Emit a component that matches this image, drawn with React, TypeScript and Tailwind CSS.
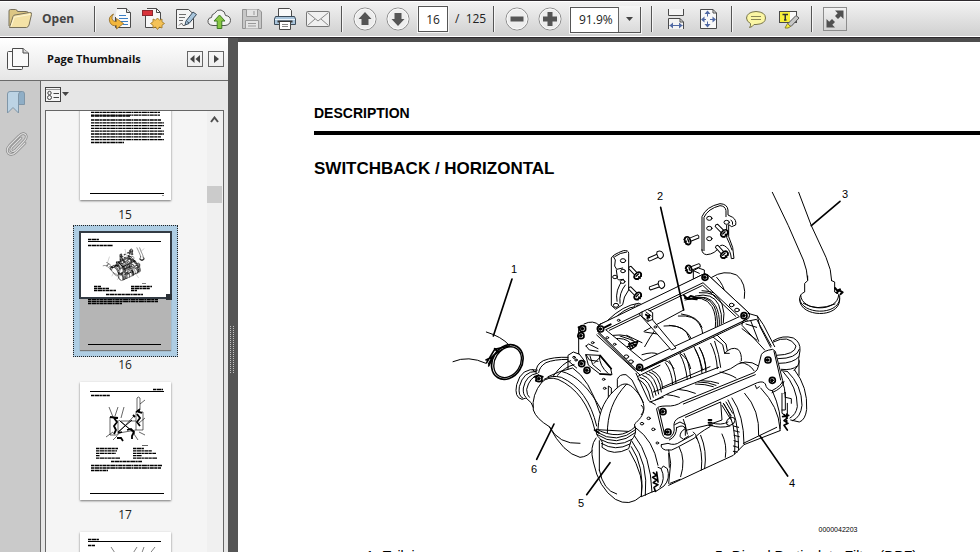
import React, { useState } from "react";

type BoltProps = { x: number; y: number; tx: number; ty: number; open?: boolean };

// bolt with its head at x,y and the shaft ending at tx,ty
const Bolt = ({ x, y, tx, ty, open }: BoltProps) => {
  const angle = (Math.atan2(ty - y, tx - x) * 180) / Math.PI;
  return (
    <g transform={`translate(${x} ${y}) rotate(${angle})`} fill="white">
      <path d="M4 -5H34Q38 0 34 5H4Z" />
      {open ? (
        <path d="M2 -12Q-12 -12 -12 0T2 12L6 6V-6Z" />
      ) : (
        <>
          <ellipse rx="8" ry="12" strokeWidth="5" />
          <path d="M-9 -7L-2 -11M-11 0H-4M-9 7L-2 11M2 -5V5" strokeWidth="4" />
        </>
      )}
    </g>
  );
};

const Nut = ({ x, y }: { x: number; y: number }) => (
  <g transform={`translate(${x} ${y})`}>
    <circle r="9" fill="white" strokeWidth="5" />
    <circle cx="-1" r="4" fill="black" />
  </g>
);

const Hole = ({ x, y, r = 5 }: { x: number; y: number; r?: number }) => (
  <ellipse cx={x} cy={y} rx={r} ry={r * 0.75} fill="white" />
);

// exhaust module, shared by the page and its thumbnail
const Engine = ({ weight = 3 }: { weight?: number }) => (
  <g
    fill="none"
    stroke="black"
    strokeWidth={weight}
    strokeLinejoin="round"
    strokeLinecap="round"
  >
    {/* tailpipe */}
    <g transform="translate(740 180) scale(.33333)">
      <path d="M97 37L145 137L190 240Q202 270 203 300M176 37L214 137L258 232Q275 270 275 302" />
      <path d="M203 288V302L194 310V336Q178 342 179 360C182 412 296 416 299 360V346Q298 342 284 336V306L275 302" />
      <path d="M182 346C184 395 292 398 296 346M179 357C184 404 294 408 299 357M190 370Q230 395 285 372" />
      <path d="M285 324L292 332L300 328M290 338L298 331L308 337L302 342" strokeWidth="6" />
      <path d="M300 64L214 137" strokeWidth="5" />
    </g>

    {/* brackets, bolts and the top frame */}
    <g transform="translate(570 190) scale(.33333)">
      <path d="M124 345V204Q128 194 160 182Q176 180 176 190V300Q160 320 158 344L138 357Z" />
      <path d="M130 200L136 210L134 228L140 238L158 234M138 262L146 270L160 268M139 240L142 262M160 268Q134 300 141 334M166 285Q146 310 150 340M134 200Q150 188 170 186" />
      <Hole x={159} y={212} r={8} />
      <Hole x={159} y={243} r={7} />
      <Hole x={135} y={261} r={7} />
      <Hole x={158} y={275} r={7} />
      <Hole x={138} y={346} r={8} />
      <path d="M396 180V80Q408 50 450 41Q472 42 474 60V75L488 82Q500 90 497 105L485 110L476 104V140Q492 172 492 205L484 206Q482 182 470 172Q456 160 448 170Q436 192 410 194Q396 192 396 180Z" />
      <path d="M402 182V82Q414 56 450 47Q466 48 468 62V80M483 90Q490 95 488 103M470 106V142Q478 158 486 180" />
      <Hole x={418} y={85} r={8} />
      <Hole x={418} y={115} r={8} />
      <Hole x={418} y={146} r={8} />
      <Hole x={470} y={97} r={8} />
      <Bolt x={463} y={130} tx={438} ty={105} />
      <Bolt x={463} y={194} tx={438} ty={167} />
      <Bolt x={353} y={152} tx={388} ty={138} />
      <Bolt x={357} y={238} tx={390} ty={225} />
      <Bolt x={203} y={257} tx={180} ty={233} />
      <Bolt x={203} y={318} tx={178} ty={293} />
      <Bolt x={268} y={195} tx={234} ty={210} open />
      <Bolt x={272} y={284} tx={238} ty={296} open />

      {/* rear canister */}
      <path d="M425 262Q462 238 500 255Q530 280 523 325M440 262Q462 285 465 312M370 275V242L385 234L403 240V252M370 242L388 250" />

      {/* hoses behind the frame */}
      <path d="M112 392Q160 345 205 340M122 396Q165 352 195 350M140 398L155 380" />
      <ellipse cx="205" cy="350" rx="12" ry="10" fill="white" />
      <ellipse cx="205" cy="350" rx="6" ry="5" />

      {/* upper pipe seen through the frame */}
      <path d="M345 330Q404 312 426 350Q440 376 436 412M354 328Q410 310 432 348Q444 374 442 410M362 326Q416 310 436 346Q450 370 448 406M376 318Q428 306 446 344Q458 372 454 402M388 308Q440 304 456 342Q466 370 460 398M396 302Q446 304 460 330" />
      <path d="M342 316L352 326L362 318L382 324M345 324L380 328" strokeWidth="6" />
      <path d="M341 360L222 424M325 378Q372 374 388 402Q398 418 398 430M334 372Q384 378 396 412M282 408Q330 402 350 428Q360 444 362 462M298 406Q340 408 358 436Q364 446 368 456" />
      <path d="M224 426L262 432M258 416Q240 440 224 470M130 436Q176 430 190 452M130 446Q166 442 180 458M150 438Q180 446 200 458M262 412Q290 436 300 464" />
      <path d="M176 462L204 454L198 468L182 478ZM180 460L190 474M186 458L196 468M172 470L200 462" strokeWidth="4" />
      <path d="M216 494Q250 484 262 492M372 470Q392 506 398 540M390 476Q408 510 408 540M270 510Q296 506 312 536M330 490Q356 506 362 536" />

      {/* frame: the window is cut out so that the bars cover the pipes */}
      <path
        d="M84 424Q76 410 92 402L204 354M222 344L395 255Q404 248 415 256L538 370Q540 386 526 390L222 536Q208 546 196 536L84 424"
      />
      <path
        d="M92 402L395 255Q404 248 415 256L538 370Q540 386 526 390L222 536Q208 546 196 536L84 424Q76 410 92 402ZM108 420L220 512L508 380L400 279Z"
        fill="white"
        fillRule="evenodd"
      />
      <path d="M118 421L398 286L497 379M84 430L194 540M214 544L532 392" />
      <path
        d="M208 372L304 480L318 474L248 390V368L232 358L216 366Z"
        fill="white"
      />
      <path d="M216 366V380L234 394L248 388M234 376V394M228 366L244 378M170 436L216 458" />
      <path d="M228 374L238 382M232 384L238 376" strokeWidth="6" />
      <Nut x={405} y={262} />
      <Nut x={522} y={377} />
      <Nut x={92} y={417} />
      <Nut x={209} y={532} />
      <path d="M104 412L122 403" strokeWidth="6" />
      <Hole x={112} y={443} r={4} />
      <Hole x={134} y={463} r={4} />
      <Hole x={146} y={391} r={4} />
      <Hole x={256} y={411} r={4} />
      <Hole x={169} y={500} r={7} />
      <Hole x={183} y={515} r={7} />
      <Hole x={485} y={345} r={7} />
      <Hole x={501} y={360} r={7} />
      <path d="M272 52L341 360" strokeWidth="5" />
    </g>

    {/* clamp, left plate */}
    <g transform="translate(440 240) scale(.33333)">
      <path d="M139 276Q185 290 207 315M39 365Q85 345 138 370" />
      <g transform="rotate(32 202 366)">
        <ellipse cx="202" cy="366" rx="44" ry="55" strokeWidth="5" />
        <ellipse cx="203" cy="366" rx="38" ry="49" strokeWidth="4" />
      </g>
      <path d="M140 368L164 328L208 318M146 372L160 346L184 330M138 360L158 350M146 378L156 358L150 352M164 326L176 338" strokeWidth="5" />
      <path d="M216 117L160 288" strokeWidth="5" />

      <path d="M416 340V262M432 252Q460 238 478 256M384 388V346L400 336L416 342M384 352Q340 350 310 362Q286 374 288 400M384 358Q342 358 318 368Q298 380 296 398" />
      <path d="M340 408Q370 366 392 362M352 406Q376 380 402 374M384 362L410 384M416 340L436 366M470 285L600 405" />
      <path d="M438 318L446 312L474 326M438 318L448 330L474 334M438 344L478 346L512 386L516 404L480 402L446 376Z" />
      <path d="M450 348L458 374L482 394M478 348Q478 378 504 400M438 344L448 360L474 364M462 370L480 352" />
      <path d="M480 402L512 404M480 346L514 386" strokeWidth="5" />
      <path d="M416 262L436 260M414 288L430 292" strokeWidth="6" />
      <Nut x={428} y={266} />
      <Nut x={423} y={287} />
      <Nut x={425} y={371} />
      <Nut x={441} y={391} />
      <Hole x={402} y={352} r={4} />
      <Hole x={408} y={360} r={4} />
      <Hole x={458} y={308} r={4} />
      <Hole x={491} y={418} r={4} />
      <Hole x={494} y={445} r={4} />
      <path d="M505 482V438L514 444V470" />
    </g>

    {/* right side and the filter body */}
    <g transform="translate(600 310) scale(.33333)">
      <path d="M444 10L472 18L490 44L524 110M436 28Q426 30 426 46L494 120M440 34L470 28L514 108M472 18L480 50L512 112M426 56L470 90M452 32L476 94M438 42L470 52" />
      <path d="M520 92Q548 74 580 84Q602 96 600 122L596 146Q600 156 594 166L582 182M598 118Q590 146 534 146M597 140Q580 160 538 160M592 168Q576 182 544 178" />
      <path d="M520 96Q566 72 588 108Q586 134 530 136M544 182L560 184M584 180Q624 232 620 298Q616 330 598 336L572 330" />
      <path d="M562 184Q606 226 606 286Q602 322 578 332M550 186Q592 230 592 290Q588 314 570 324M546 212Q556 232 556 262M597 152V196" />
      <path d="M546 250V310L556 316M552 250L556 246V262L574 266V280M562 280V320M556 262V300H546" />
      <path d="M552 314L562 324L552 332L564 340L552 346L562 360M548 320L566 316M560 312V340" strokeWidth="5" />

      {/* bellows */}
      <path d="M114 208Q142 218 152 268M120 202Q150 208 160 262M128 196Q158 204 168 256M138 190Q166 196 176 252M148 186Q178 194 184 246M156 182Q186 194 188 236" />
      <path d="M112 200L180 166M126 180L190 152M150 276L190 262M108 190L146 272L166 284" />
      <path d="M160 246L356 172M186 232L330 170M196 158Q216 184 218 224M208 152Q226 180 228 220M240 134Q256 160 262 208M252 130Q268 156 272 204M286 118Q302 146 306 190M298 112Q316 140 318 186M332 100Q350 134 352 176M344 94Q358 134 362 172M340 82L368 104L374 130H388M374 130Q394 108 414 118Q426 130 424 152M352 76L378 102L382 122" />
      <path d="M166 270L210 248L392 176Q436 140 476 168M200 254Q222 256 238 262M234 238Q262 240 286 250M286 222Q316 222 340 230M294 216Q326 216 348 226M304 212Q334 212 356 220M360 186Q390 192 408 204M420 156Q450 162 462 182" />

      {/* filter body */}
      <path d="M206 526L300 482L400 436L432 404L540 362M540 362Q548 310 516 240M434 250Q480 300 476 376M482 234Q536 290 540 356M466 226L470 236L478 230M430 400L530 352M396 264Q432 316 432 402M384 270Q416 320 416 420M366 372Q382 404 376 442" />
      <path d="M372 282Q412 340 404 432M366 286L392 328M370 280L394 318M378 276L398 310M400 348L416 352M402 362L418 366M402 376L418 380M402 392L416 396M400 408L414 412M400 424L412 426" />
      <path d="M302 376Q322 422 314 476M290 382Q310 424 304 480M238 412Q258 450 242 500M206 420L212 460L206 520" />
      <path d="M250 328L256 346L262 372M256 322L362 276L366 330L338 340M262 360L330 344M224 344L240 336L256 344V376M232 352Q250 342 256 356Q240 364 240 380L250 388L266 378" />
      <path d="M184 404Q180 414 196 420Q216 424 232 412L284 384Q292 372 330 350M184 404L204 400Q224 408 240 396L280 374M280 366Q290 372 290 386M332 346Q360 356 390 348M332 338Q364 348 384 336" />
      <ellipse cx="392" cy="334" rx="14" ry="10" transform="rotate(-40 392 334)" />
      <path d="M326 330H334M326 338H334M328 346H336" strokeWidth="6" />

      {/* front bar */}
      <path
        d="M170 296Q172 288 198 288Q226 290 246 276L462 188Q474 182 476 166L484 134Q490 122 518 118L526 124L548 212Q546 226 516 242Q500 240 496 222Q490 212 472 218L236 324Q220 332 222 350Q226 372 208 384Q192 388 188 374Z"
        fill="white"
      />
      <path d="M176 296L194 374M250 282L466 194M522 124L542 210M208 390Q230 380 230 352M516 248Q550 234 552 214" />
      <Nut x={189} y={305} />
      <Nut x={204} y={366} />
      <Nut x={504} y={150} />
      <Nut x={517} y={211} />
      <Hole x={146} y={325} r={5} />
      <Hole x={126} y={341} r={5} />
      <Hole x={160} y={358} r={5} />
      <Hole x={172} y={399} r={4} />
      <path d="M480 378L563 498" strokeWidth="5" />
    </g>

    {/* canisters 5 and 6 */}
    <g transform="translate(500 360) scale(.33333)">
      <path d="M112 30Q64 20 50 74Q42 112 66 118L78 114Q98 128 100 142M108 34Q70 34 58 80Q54 108 68 114M112 40Q78 44 70 84Q68 104 78 112M116 44Q88 52 80 88Q80 106 88 112M98 28L104 36" />
      <path d="M104 50H128M108 62H126" strokeWidth="6" />
      <Nut x={117} y={56} />
      <path d="M126 66Q94 104 100 150Q108 176 148 200Q190 280 240 292Q264 290 276 272M148 200Q176 254 240 250M126 66Q144 48 174 58Q258 96 284 208M132 58Q156 44 184 52Q264 88 290 198M144 50Q180 32 218 24Q268 56 300 160M184 34Q250 50 304 150" />

      <path
        d="M294 208C296 150 318 110 356 80C372 66 390 72 402 86C420 104 432 124 432 146C430 168 416 180 404 192V214Z"
        fill="white"
      />
      <path d="M322 222C322 164 338 116 380 72M352 82V58Q358 42 378 44L396 60L430 128M424 136Q438 148 424 164" />
      <path
        d="M290 208Q284 222 300 236Q312 246 306 262Q340 290 386 266L394 240Q410 226 406 200Q360 244 290 208Z"
        fill="white"
      />
      <path d="M290 216Q350 256 408 208M292 224Q350 264 406 218M300 238Q350 266 396 238M304 250Q346 276 390 252" />
      <path d="M284 210L296 218" strokeWidth="6" />
      <path d="M288 234Q268 260 280 306Q296 384 346 418Q388 442 424 408Q436 352 388 272M298 242V332M298 330Q310 392 350 402M404 228Q452 286 456 396M396 244Q446 310 436 406M408 204Q460 240 474 316M394 260Q434 320 424 406M424 410L456 396L468 392" />
      <path d="M474 322L484 326L490 318L502 326Q512 356 492 378L468 394M484 328Q498 356 480 382M506 280L508 322M510 370L540 358" />
      <path d="M460 338L470 346L458 352L470 360L460 368L474 374L462 382L466 394M470 336L474 366" strokeWidth="5" />
      <path d="M162 192L110 298M330 308L260 404" strokeWidth="5" />
    </g>
  </g>
);

const ink = "3 .5 5 .4 2 .5 4 .4";

const TextLine = ({ x1, x2, y }: { x1: number; x2: number; y: number }) => (
  <path d={`M${x1} ${y}H${x2}`} strokeDasharray={ink} strokeWidth="1.3" />
);

const rows = (from: number, count: number, step: number) =>
  Array.from({ length: count }, (_, i) => from + i * step);

const Page15 = () => (
  <g stroke="black">
    {rows(22, 5, 2.8).map((y) => (
      <TextLine key={y} x1={11} x2={80} y={y} />
    ))}
    <TextLine x1={11} x2={50} y={34} />
    {rows(38, 8, 2.8).map((y, i) => (
      <TextLine key={y} x1={11} x2={i % 3 ? 84 : 81} y={y} />
    ))}
    <TextLine x1={11} x2={44} y={60.5} />
    <path d="M10 111.5H84" />
    <path d="M82 113.5H84" strokeOpacity=".4" />
  </g>
);

const Page16 = () => (
  <g stroke="black">
    <TextLine x1={8} x2={19} y={7.5} />
    <path d="M8 9.5H81" />
    <TextLine x1={8} x2={33} y={13.5} />
    <svg x="22" y="15" width="45" height="37" viewBox="450 185 410 350">
      <Engine weight={12} />
    </svg>
    <path d="M62 51.5H66" strokeOpacity=".5" />
    {rows(54.5, 3, 2).map((y, i) => (
      <g key={y}>
        <TextLine x1={14} x2={[21, 29, 36][i]} y={y} />
        <TextLine x1={51} x2={[72, 70, 57][i]} y={y} />
      </g>
    ))}
    <TextLine x1={26} x2={63} y={62.5} />
    <TextLine x1={8} x2={78} y={67.5} />
    <TextLine x1={8} x2={78} y={69.5} />
    <TextLine x1={8} x2={42} y={71.5} />
    <path d="M8 112.5H81" />
  </g>
);

const Page17 = () => (
  <g stroke="black">
    <TextLine x1={73} x2={83} y={7.5} />
    <path d="M10 9.5H84" />
    <TextLine x1={11} x2={30} y={13.5} />
    <g fill="none">
      <path
        d="M29 25L33 35M38 25L35 34M44 25L41 36M65 18L60 22M65 36L59 41M65 53L59 50M26 55L33 50M58 58L54 52M33 58L37 54M57 28V16Q58 14 60 16V28M56 30H63V48H56ZM30 35V53H38V38M39 38L55 52M39 50L54 34M41 39H56M39 51L56 48"
        strokeWidth=".6"
      />
      <path d="M30 35L38 36M34 36L37 40L34 44L36 48L34 52M57 32L60 36L57 40L60 44M56 30L59 28V30L62 31M53 33L55 35M47 48L51 47L54 50L52 54V57M38 51L42 50M37 56H41L43 59" strokeWidth="1.8" />
      <path d="M40 39L52 49M38 50L52 38" />
    </g>
    <path d="M62 63.5H68" strokeOpacity=".6" />
    {rows(66.5, 5, 2.4).map((y, i) => (
      <g key={y}>
        <TextLine x1={16} x2={[38, 37, 36, 20, 40][i]} y={y} />
        <TextLine x1={53} x2={[64, 72, 76, 62, 77][i]} y={y} />
      </g>
    ))}
    <TextLine x1={31} x2={62} y={79.5} />
    <TextLine x1={11} x2={82} y={83.5} />
    <TextLine x1={11} x2={81} y={86} />
    <TextLine x1={11} x2={28} y={88.5} />
    <path d="M10 111.5H84" />
  </g>
);

const Page18 = () => (
  <g stroke="black">
    <TextLine x1={8} x2={19} y={7.5} />
    <path d="M8 9.5H81" />
    <TextLine x1={8} x2={15} y={13.5} />
    <path d="M31 15L37 24M57 15L50 26M64 15L60 26M75 15L68 24" strokeWidth=".5" />
  </g>
);

const thumbnails = [
  { page: 15, Drawing: Page15 },
  { page: 16, Drawing: Page16 },
  { page: 17, Drawing: Page17 },
  { page: 18, Drawing: Page18 },
];

const Separator = () => (
  <div className="h-[26px] w-[2px] shrink-0 border-l border-[#555] bg-[#f6f6f6]" />
);

const ToolButton = ({ label, children }: { label: string; children: React.ReactNode }) => (
  <button aria-label={label} className="grid h-7 w-[33px] shrink-0 place-items-center">
    <svg width="24" height="24" viewBox="0 0 24 24" fill="none" stroke="#4a4a4a">
      {children}
    </svg>
  </button>
);

const RoundButton = ({ label, d }: { label: string; d: string }) => (
  <ToolButton label={label}>
    <circle cx="12" cy="12" r="11" fill="#ededed" stroke="#8c8c8c" />
    <circle cx="12" cy="12" r="10" stroke="#fafafa" />
    <path d={d} fill="#555" stroke="none" />
  </ToolButton>
);

const Toolbar = () => {
  const [page, setPage] = useState("16");
  return (
    <header className="flex h-[38px] shrink-0 items-center border-y border-[#2d292d] bg-linear-to-b from-[#f3f3f3] to-[#cfcfcf] text-[#222] shadow-[inset_0_1px_0_#fff,inset_0_-1px_0_#fff]">
      <button className="flex w-[94px] shrink-0 items-center gap-2 pl-2 text-[12px] font-bold text-[#444]">
        <svg width="26" height="22" viewBox="0 0 26 22" fill="none" stroke="#77705a">
          <path d="M1 18V3Q1 1.500 2.500 1.500H7.500Q9 1.500 9.500 3.500H18.500Q20 3.500 20 5V8" fill="#dcc684" />
          <path d="M1.500 19.500L5 8.500Q5.500 7 7 7L21.500 4.500Q24 4 23.500 6.500L21 17Q20.500 19 18.500 19.500Z" fill="#f4e2a6" />
          <path d="M3 18.500L6.300 9.200L22 6.500" stroke="#fff6d5" />
        </svg>
        Open
      </button>
      <Separator />
      <div className="flex px-[7px]">
        <ToolButton label="Export file">
          <path d="M9 1.500H18.500L22.500 5.500V20.500H7.500V10" fill="#fbfbfb" />
          <path d="M18.500 1.500V5.500H22.500" fill="#ddd" />
          <path d="M11 8.500H18M11 11.500H20M13 14.500H20M15 17.500H20" stroke="#3d7fc4" />
          <path d="M5.500 7Q-.5 10 2 15.500Q4 19.500 8.500 18.500V22L15.500 16.500L8.500 11.500V14.500Q5 15 4 12Q3.500 9.500 5.500 7Z" fill="#f2b63c" stroke="#8f6a24" strokeWidth=".8" />
        </ToolButton>
        <ToolButton label="Create PDF">
          <path d="M4.500 5V20.500H19.500V5.500L15.500 1.500H6" fill="#f7f7f7" />
          <path d="M15.500 1.500V5.500H19.500" />
          <rect x="1.500" y="3.500" width="10" height="5" fill="#d8333b" stroke="#8c2930" />
          <path d="M16.500 11L18.500 13.200L21 12L21 14.800L23.500 16.500L21 18.200V21L18.500 20L16.500 22.500L14.500 20L12 21V18.200L9.500 16.500L12 14.800V12L14.500 13.200Z" fill="#f4c257" stroke="#9c7422" strokeWidth=".8" />
        </ToolButton>
        <ToolButton label="Sign">
          <path d="M2.500 2.500H14.500L19.500 7V21.500H2.500Z" fill="#f4f4f4" />
          <path d="M5 7.500H12M5 10.500H11M5 13.500H9M5 18.500L7.500 16L9 18.500H11" strokeWidth=".8" />
          <path d="M11 18L12 14L19 5L22.500 7.500L15 16.500Z" fill="#a9c6dd" stroke="#384a5a" />
          <path d="M13 14.500L15 16" stroke="#384a5a" />
        </ToolButton>
        <ToolButton label="Upload">
          <path d="M6 18.500Q.5 18 1 13.500Q1.500 10.500 4.500 10.500Q4.500 7 7.500 6.500Q10 2 14 3Q18 4 18.500 8.500Q23.500 9 23.500 13.500Q23 18 18 18.500Z" fill="#f3f3f3" stroke="#555" />
          <path d="M12.500 8L18 14H14.800V21.500H10.200V14H7Z" fill="#88c742" stroke="#3f7b24" />
        </ToolButton>
        <ToolButton label="Save">
          <path d="M2.500 2.500H19L21.500 5V21.500H2.500Z" fill="#c7c7c7" stroke="#939393" />
          <path d="M6.500 2.500V9.500H17.500V2.500M5.500 21.500V13.500H18.500V21.500" fill="#e4e4e4" stroke="#9a9a9a" />
          <path d="M14 4V8M8 16.500H16M8 19H16" stroke="#999" />
        </ToolButton>
        <ToolButton label="Print">
          <path d="M5.500 10V1.500H16.500L18.500 3.500V10" fill="#fafafa" />
          <path d="M2.500 9.500H21.500L22.500 12V17.500H1.500V12Z" fill="#a9c4db" stroke="#3c4c5a" />
          <path d="M2 12.500H22" stroke="#edf5fc" />
          <path d="M4.500 14.500H19.500" stroke="#333" strokeWidth="2" />
          <path d="M6.500 15V22.500H17.500V15" fill="#fff" />
          <path d="M9 17.500H15M9 19.500H15" stroke="#888" />
        </ToolButton>
        <ToolButton label="Email">
          <rect x=".5" y="4.500" width="23" height="15" rx="1" fill="#f0f0f0" stroke="#777" />
          <path d="M1.500 5.500L12 14L22.500 5.500M1.500 18.500L9 12M22.500 18.500L15 12" stroke="#888" />
        </ToolButton>
      </div>
      <Separator />
      <div className="flex pl-[5px]">
        <RoundButton label="Previous page" d="M12 5L18.500 12H15.500V18H8.500V12H5.500Z" />
        <RoundButton label="Next page" d="M12 19L5.500 12H8.500V6H15.500V12H18.500Z" />
      </div>
      <input
        aria-label="Page number"
        value={page}
        onChange={(e) => setPage(e.target.value)}
        className="ml-1 h-[26px] w-[30px] shrink-0 border border-[#555] bg-white text-center text-[12px] outline outline-[#f5f5f5]"
      />
      <span className="w-[45px] shrink-0 pl-[7px] text-[12px] whitespace-pre">/  125</span>
      <Separator />
      <div className="flex pl-[5px]">
        <RoundButton label="Zoom out" d="M5.500 9.500H18.500V14.500H5.500Z" />
        <RoundButton label="Zoom in" d="M5 9.500H9.500V5H14.500V9.500H19V14.500H14.500V19H9.500V14.500H5Z" />
      </div>
      <div className="relative mr-[10px] ml-1 shrink-0">
        <select
          aria-label="Zoom level"
          className="h-[26px] w-[71px] appearance-none border border-[#555] bg-white pl-2 text-[12px] outline outline-[#f5f5f5]"
        >
          <option>91.9%</option>
          <option>100%</option>
          <option>125%</option>
        </select>
        <div className="pointer-events-none absolute inset-y-px right-px grid w-[22px] place-items-center border-l border-[#666] bg-linear-to-b from-[#f4f4f4] to-[#dadada]">
          <svg width="7" height="4" viewBox="0 0 7 4">
            <path d="M0 0H7L3.500 4Z" fill="#444" />
          </svg>
        </div>
      </div>
      <Separator />
      <div className="flex px-[6px]">
        <ToolButton label="Fit width">
          <path d="M4.500 2V8.500H19.500V2M4.500 22V11.500H16L19.500 15V22" fill="#f4f4f4" />
          <path d="M16 11.500V15H19.500" />
          <path d="M5.500 18.500H18.500" stroke="#5069a4" />
          <path d="M9 15.500V21.500L5.500 18.500ZM15 15.500V21.500L18.500 18.500Z" fill="#5069a4" stroke="none" />
        </ToolButton>
        <ToolButton label="Fit page">
          <path d="M3.500 2.500H16L19.500 6V21.500H3.500Z" fill="#f8f8f8" />
          <path d="M16 2.500V6H19.500" />
          <path d="M10.500 4V9.500M10.500 14.500V20M5 12.500H9M13 12.500H18" stroke="#5069a4" />
          <path d="M10.500 3.500L13.500 7H7.500ZM10.500 20.500L13.500 17H7.500ZM4 12.500L7.500 9.500V15.500ZM19 12.500L15.500 9.500V15.500Z" fill="#5069a4" stroke="none" />
        </ToolButton>
      </div>
      <Separator />
      <div className="flex px-[6px]">
        <ToolButton label="Comment">
          <path d="M12 4.500Q21.500 5 21.500 11T12 17.500H10Q8.500 20 5.500 20.500Q7 19 6.500 16.500Q2.500 14.500 2.500 11Q3 5 12 4.500Z" fill="#fbf6a4" stroke="#77744b" />
          <path d="M7 9.500H17M7 12.500H17" stroke="#8b8757" />
        </ToolButton>
        <ToolButton label="Highlight">
          <rect x="2.500" y="4.500" width="17" height="11" fill="#fafafa" />
          <rect x="3" y="5" width="10" height="10" fill="#f8f03c" stroke="none" />
          <path d="M5.500 7.500H11M8.250 7.500V13M7 13H9.500" stroke="#333" strokeWidth="1.500" />
          <path d="M10.500 17L19 8.500L22 11L14 19.500Z" fill="#c6c6c6" stroke="#555" />
          <path d="M10.500 16.500L13.500 19.500L11 21H8Z" fill="#f8ee3c" stroke="#8a842f" />
        </ToolButton>
      </div>
      <Separator />
      <button
        aria-label="Full screen"
        className="ml-[10px] grid size-6 shrink-0 place-items-center border border-[#8c8c8c] bg-linear-to-b from-[#f2f2f2] to-[#d4d4d4]"
      >
        <svg width="20" height="20" viewBox="0 0 20 20" fill="#505050">
          <path d="M10 1.500H18.500V10L15.800 7.300L13 10L10 7L12.700 4.200Z" />
          <path d="M10 18.500H1.500V10L4.200 12.700L7 10L10 13L7.300 15.800Z" />
        </svg>
      </button>
    </header>
  );
};

const Sidebar = () => (
  <aside className="flex w-[228px] shrink-0 bg-[#e6e6e6]">
    <nav className="flex w-[40px] shrink-0 flex-col items-center bg-[#cacaca]">
      <button
        aria-label="Page thumbnails"
        className="grid h-[43px] w-full place-items-center border-b border-[#6a6a6a] bg-linear-to-b from-white to-[#e6e6e6] pr-1"
      >
        <svg width="22" height="24" viewBox="0 0 22 24" fill="#fafafa" stroke="#4b4b4b">
          <rect x=".5" y="4.500" width="15" height="18" rx="1" />
          <path d="M5.500 1.500H16L21.500 6V19.500H5.500Z" />
          <path d="M16 1.500V6H21.500" fill="#ddd" />
        </svg>
      </button>
      <button aria-label="Bookmarks" className="grid h-[42px] w-full place-items-center pr-2">
        <svg width="18" height="24" viewBox="0 0 18 24" stroke="#7f96a8">
          <path d="M11.500 1.500H15.500Q17.500 1.500 17.500 4V14.500H11.500Z" fill="#8faec6" />
          <path d="M.5 4Q.5 1.500 3 1.500H14Q11.500 2 11.500 5V23L6 17.500L.5 23Z" fill="#bcd3e4" />
        </svg>
      </button>
      <button aria-label="Attachments" className="grid h-[42px] w-full place-items-center pr-[6px]">
        <svg width="24" height="26" viewBox="0 0 24 26" fill="none" strokeLinecap="round">
          <path d="M16 7L7 16Q5 18.500 6.500 20Q8.500 21 10.500 19L19.500 9.500Q22.500 6 20.500 3.500Q17.500 1 14 5L4.500 14.500Q.5 19 3.500 22.500Q7 25 11 21L20 12" stroke="#868686" strokeWidth="2.600" />
          <path d="M16 7L7 16Q5 18.500 6.500 20Q8.500 21 10.500 19L19.500 9.500Q22.500 6 20.500 3.500Q17.500 1 14 5L4.500 14.500Q.5 19 3.500 22.500Q7 25 11 21L20 12" stroke="#dedede" strokeWidth="1.200" />
        </svg>
      </button>
    </nav>
    <section className="flex min-w-0 flex-1 flex-col">
      <div className="flex h-[43px] shrink-0 items-center gap-[5px] border-b border-[#6a6a6a] bg-linear-to-b from-white to-[#e6e6e6] pr-1 pl-[7px]">
        <h2 className="flex-1 text-[11px] font-bold whitespace-nowrap text-[#111]">Page Thumbnails</h2>
        <button aria-label="Collapse" className="grid size-4 place-items-center border border-[#666]">
          <svg width="10" height="8" viewBox="0 0 10 8" fill="#444">
            <path d="M4.500 0V8L0 4ZM10 0V8L5.500 4Z" />
          </svg>
        </button>
        <button aria-label="Expand" className="grid size-4 place-items-center border border-[#666]">
          <svg width="5" height="8" viewBox="0 0 5 8" fill="#444">
            <path d="M0 0L5 4L0 8Z" />
          </svg>
        </button>
      </div>
      <div className="flex min-h-0 flex-1 flex-col border-l border-[#666] pr-1 pl-1">
        <button aria-label="Options" className="flex h-[29px] w-6 shrink-0 items-center gap-px pb-[3px]">
          <svg width="16" height="15" viewBox="0 0 16 15" fill="none" stroke="#444" className="shrink-0">
            <rect x=".5" y=".5" width="15" height="14" fill="#f4f4f4" />
            <path d="M1 2.500H15" stroke="#999" />
            <circle cx="4.500" cy="6" r="1.700" />
            <circle cx="4.500" cy="10.500" r="2" />
            <path d="M8.500 6.500H14M8.500 10.500H14" />
          </svg>
          <svg width="7" height="4" viewBox="0 0 7 4" className="shrink-0">
            <path d="M0 0H7L3.500 4Z" fill="#444" />
          </svg>
        </button>
        <div className="flex min-h-0 flex-1 overflow-hidden border-x border-t border-[#666] bg-[#f5f5f5]">
          <ul className="-mt-9 flex-1 pr-[3px]">
            {thumbnails.map(({ page, Drawing }) => {
              const current = page === 16;
              return (
                <li key={page} className="flex h-[150px] flex-col items-center">
                  <a
                    href={`#page-${page}`}
                    aria-label={`Page ${page}`}
                    className={
                      current
                        ? "relative border border-dotted border-[#222] bg-[#aecde3] p-[6px]"
                        : "relative p-[7px]"
                    }
                  >
                    <svg
                      width="91"
                      height="118"
                      viewBox="0 0 91 118"
                      className={
                        current
                          ? "bg-[#b5b5b5] shadow-[0_1px_1px_#777]"
                          : "bg-white shadow-[0_1px_2px_#777]"
                      }
                    >
                      {current && <rect width="91" height="66" fill="white" />}
                      <Drawing />
                    </svg>
                    {current && (
                      <div className="absolute inset-x-[5px] top-[5px] h-[68px] border-2 border-[#333b44]">
                        <div className="absolute -right-[2px] -bottom-[3px] size-[6px] bg-[#2c3136]" />
                      </div>
                    )}
                  </a>
                  <span className="text-[12px] leading-4 text-[#222]">{page}</span>
                </li>
              );
            })}
          </ul>
          <div className="flex w-4 shrink-0 flex-col items-center bg-[#f0f0f0] pr-px">
            <svg width="9" height="7" viewBox="0 0 9 7" fill="none" stroke="#505050" strokeWidth="2" className="mt-[5px]">
              <path d="M1 6L4.500 1.500L8 6" />
            </svg>
            <div className="mt-[63px] h-[17px] w-full bg-[#cbcbcb]" />
          </div>
        </div>
      </div>
    </section>
  </aside>
);

const callouts = [
  { n: 1, x: 514, y: 273 },
  { n: 2, x: 660, y: 200 },
  { n: 3, x: 845, y: 198 },
  { n: 4, x: 792, y: 487 },
  { n: 5, x: 581, y: 507 },
  { n: 6, x: 534, y: 473 },
];

const Document = () => (
  <main className="min-w-0 flex-1 overflow-hidden bg-white pl-[76px] font-['Liberation_Sans',Arial,sans-serif] text-black">
    <h1 className="pt-[61px] text-[14px] leading-5 font-bold">DESCRIPTION</h1>
    <hr className="mt-2 border-t-4 border-black" />
    <h2 className="mt-6 text-[17px] leading-5 font-bold">SWITCHBACK / HORIZONTAL</h2>
    <svg width="430" height="361" viewBox="440 179 430 361" className="ml-[126px]">
      <Engine />
      <g fontSize="11" textAnchor="middle">
        {callouts.map(({ n, x, y }) => (
          <text key={n} x={x} y={y}>
            {n}
          </text>
        ))}
        <text x="838" y="532" fontSize="7">
          0000042203
        </text>
      </g>
    </svg>
    <div className="mt-[6px] ml-[52px] flex text-[14px] leading-5">
      <p className="flex w-[349px] shrink-0 gap-[5px]">
        <span>1.</span>
        <span>Tailpipe</span>
      </p>
      <p className="flex gap-[5px] whitespace-nowrap">
        <span>5.</span>
        <span>Diesel Particulate Filter (DPF)</span>
      </p>
    </div>
  </main>
);

export default function App() {
  return (
    <div className="flex h-screen flex-col overflow-hidden bg-[#4d4d4d] font-['Open_Sans','Segoe_UI',sans-serif]">
      <Toolbar />
      <div className="flex min-h-0 flex-1">
        <Sidebar />
        <div className="flex w-[10px] shrink-0 items-center bg-[#555] pl-[2px]">
          <svg width="4" height="48" viewBox="0 0 4 48" stroke="#c4c4c4" strokeDasharray="1 1" className="mt-[110px]">
            <path d="M.5 0V48M3.500 0V48" />
          </svg>
        </div>
        <div className="flex min-w-0 flex-1 pt-1">
          <Document />
        </div>
      </div>
    </div>
  );
}
